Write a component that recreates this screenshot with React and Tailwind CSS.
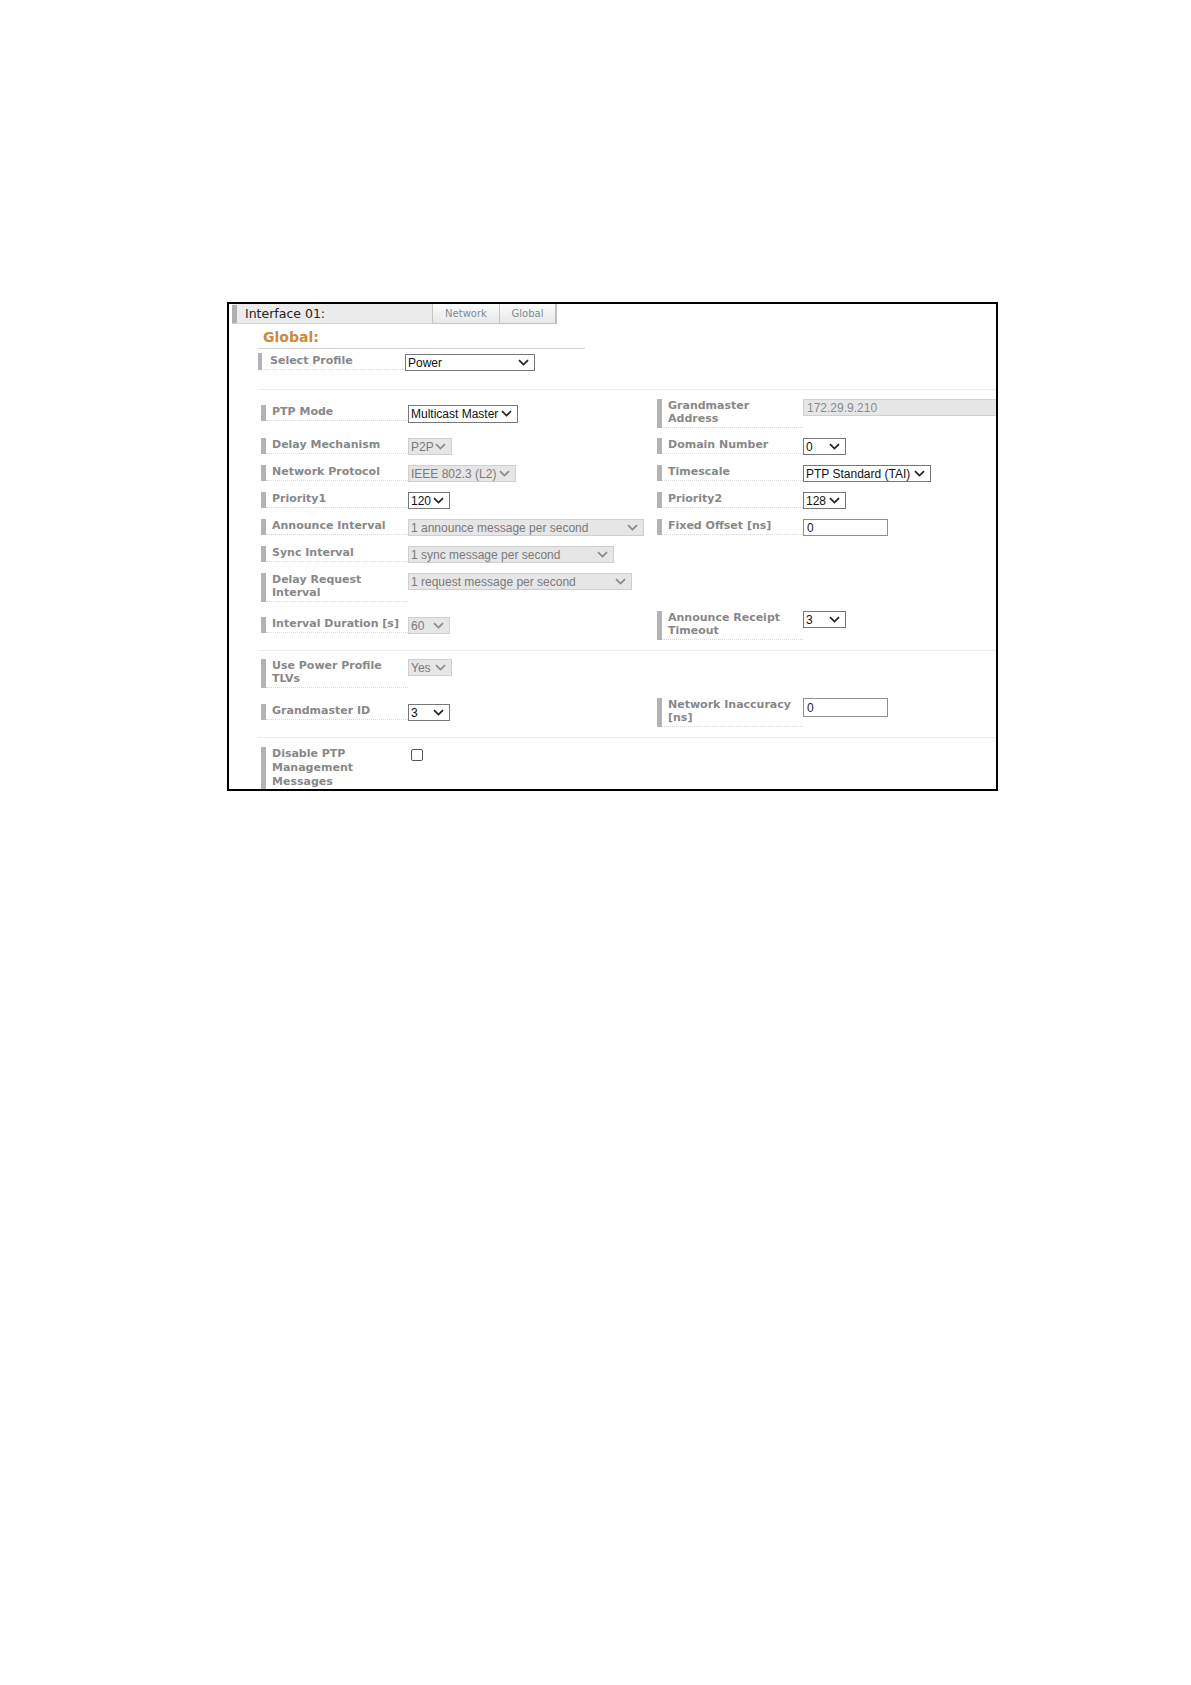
import React from "react";

const LBL =
  "font-['DejaVu_Sans',Verdana,sans-serif] font-bold text-[11px] leading-[13px] text-[#888888] whitespace-nowrap";
const CTRL = "font-['Liberation_Sans',Arial,sans-serif] text-[12px] leading-[14px]";

function Chevron({ color }) {
  return (
    <svg width="11" height="7" viewBox="0 0 11 7" className="shrink-0">
      <path d="M1 1.2 L5.5 5.6 L10 1.2" fill="none" stroke={color} strokeWidth="1.7" />
    </svg>
  );
}

function Label({ children, narrow }) {
  return (
    <div className="flex items-stretch shrink-0">
      <div className="w-[5px] bg-[#b3b3b3] shrink-0" />
      <div
        className={`${narrow ? "w-[141px]" : "w-[142px]"} pl-[6px] pt-0 pb-[2px] border-b border-dotted border-[#d8d8d8] ${LBL}`}
      >
        {children}
      </div>
    </div>
  );
}

function Select({ value, w, disabled, h }) {
  return (
    <div
      className={`${w} ${h || "h-[17px]"} flex items-center justify-between border pl-[2px] pr-[5px] ${CTRL} ${
        disabled ? "bg-[#e6e6e6] border-[#cfcfcf] text-[#7a7a7a]" : "bg-white border-[#777777] text-[#111]"
      }`}
    >
      <span className="whitespace-nowrap">{value}</span>
      <Chevron color={disabled ? "#8a8a8a" : "#222"} />
    </div>
  );
}

function Input({ value, w, h, disabled }) {
  return (
    <div
      className={`${w} ${h} flex items-center border pl-[3px] ${CTRL} ${
        disabled ? "bg-[#e6e6e6] border-[#d0d0d0] text-[#8a8a8a]" : "bg-white border-[#8f8f8f] text-[#222]"
      }`}
    >
      {value}
    </div>
  );
}

function Side({ label, control, right }) {
  return (
    <div className={`${right ? "" : "w-[396px]"} flex items-start shrink-0`}>
      <Label narrow={right}>{label}</Label>
      {control}
    </div>
  );
}

function Row({ left, right, mt }) {
  return (
    <div className={`flex items-center ml-[32px] ${mt}`}>
      <div className="w-[396px] flex items-center shrink-0">{left}</div>
      <div className="flex items-center">{right}</div>
    </div>
  );
}

function Sep({ mt }) {
  return <div className={`${mt} ml-[29px] h-px bg-[#ececec]`} />;
}

export default function App() {
  return (
    <div className="w-[1191px] h-[1685px] bg-white pt-[302px] pl-[227px]">
      <div className="w-[771px] h-[489px] border-2 border-black overflow-hidden bg-white">
        {/* header */}
        <div className="flex h-[20px]">
          <div className="w-[3px] shrink-0" />
          <div className="w-[200px] flex items-stretch bg-[#ececec] border-b border-[#d2d2d2] pt-[1px]">
            <div className="w-[5px] bg-[#b0b0b0]" />
            <span className="pl-[8px] font-['DejaVu_Sans',Verdana,sans-serif] text-[12.5px] leading-[17px] text-[#222]">
              Interface 01:
            </span>
          </div>
          <div className="w-[68px] h-[20px] flex items-center justify-center border-x border-b border-[#c6c6c6] bg-gradient-to-b from-[#fcfcfc] to-[#e8e8e8] font-['DejaVu_Sans',Verdana,sans-serif] text-[10px] text-[#7d8a97]">
            Network
          </div>
          <div className="w-[57px] h-[20px] flex items-center justify-center border-r-2 border-b border-[#c0c0c0] bg-gradient-to-b from-[#fcfcfc] to-[#e8e8e8] font-['DejaVu_Sans',Verdana,sans-serif] text-[10px] text-[#7d8a97]">
            Global
          </div>
        </div>

        {/* Global title */}
        <div className="mt-[5px] ml-[29px] w-[327px] pl-[5px] pb-[2px] border-b border-[#d4d4d4] font-['DejaVu_Sans',Verdana,sans-serif] font-bold text-[14px] leading-[17px] text-[#d0883a]">
          Global:
        </div>

        {/* Select profile */}
        <div className="mt-[4px] ml-[29px] flex items-start">
          <div className="flex items-stretch">
            <div className="w-[4px] bg-[#b3b3b3]" />
            <div className={`w-[143px] pl-[8px] pt-[1px] pb-[2px] border-b border-dotted border-[#d8d8d8] ${LBL}`}>
              Select Profile
            </div>
          </div>
          <div className="mt-[1px]">
            <Select value="Power" w="w-[130px]" />
          </div>
        </div>

        <Sep mt="mt-[18px]" />

        <Row
          mt="mt-[9px]"
          left={<Side label="PTP Mode" control={<Select value="Multicast Master" w="w-[110px]" h="h-[18px]" />} />}
          right={
            <Side
              right
              label={
                <>
                  Grandmaster
                  <br />
                  Address
                </>
              }
              control={<Input value="172.29.9.210" w="w-[200px]" h="h-[17px]" disabled />}
            />
          }
        />
        <Row
          mt="mt-[10px]"
          left={<Side label="Delay Mechanism" control={<Select value="P2P" w="w-[44px]" disabled />} />}
          right={<Side right label="Domain Number" control={<Select value="0" w="w-[43px]" />} />}
        />
        <Row
          mt="mt-[10px]"
          left={<Side label="Network Protocol" control={<Select value="IEEE 802.3 (L2)" w="w-[108px]" disabled />} />}
          right={<Side right label="Timescale" control={<Select value="PTP Standard (TAI)" w="w-[128px]" />} />}
        />
        <Row
          mt="mt-[10px]"
          left={<Side label="Priority1" control={<Select value="120" w="w-[42px]" />} />}
          right={<Side right label="Priority2" control={<Select value="128" w="w-[43px]" />} />}
        />
        <Row
          mt="mt-[10px]"
          left={
            <Side
              label="Announce Interval"
              control={<Select value="1 announce message per second" w="w-[236px]" disabled />}
            />
          }
          right={<Side right label="Fixed Offset [ns]" control={<Input value="0" w="w-[85px]" h="h-[17px]" />} />}
        />
        <Row
          mt="mt-[10px]"
          left={
            <Side label="Sync Interval" control={<Select value="1 sync message per second" w="w-[206px]" disabled />} />
          }
        />
        <Row
          mt="mt-[10px]"
          left={
            <Side
              label={
                <>
                  Delay Request
                  <br />
                  Interval
                </>
              }
              control={<Select value="1 request message per second" w="w-[224px]" disabled />}
            />
          }
        />
        <Row
          mt="mt-[9px]"
          left={<Side label="Interval Duration [s]" control={<Select value="60" w="w-[42px]" disabled />} />}
          right={
            <Side
              right
              label={
                <>
                  Announce Receipt
                  <br />
                  Timeout
                </>
              }
              control={<Select value="3" w="w-[43px]" />}
            />
          }
        />

        <Sep mt="mt-[10px]" />

        <Row
          mt="mt-[8px]"
          left={
            <Side
              label={
                <>
                  Use Power Profile
                  <br />
                  TLVs
                </>
              }
              control={<Select value="Yes" w="w-[44px]" disabled />}
            />
          }
        />
        <Row
          mt="mt-[10px]"
          left={<Side label="Grandmaster ID" control={<Select value="3" w="w-[42px]" />} />}
          right={
            <Side
              right
              label={
                <>
                  Network Inaccuracy
                  <br />
                  [ns]
                </>
              }
              control={<Input value="0" w="w-[85px]" h="h-[19px]" />}
            />
          }
        />

        <Sep mt="mt-[10px]" />

        <div className="mt-[9px] ml-[32px] flex items-start">
          <div className="flex items-stretch">
            <div className="w-[5px] bg-[#b3b3b3]" />
            <div className={`w-[142px] pl-[6px] pt-0 pb-[4px] border-b border-dotted border-[#d8d8d8] ${LBL} leading-[14px]`}>
              Disable PTP
              <br />
              Management
              <br />
              Messages
            </div>
          </div>
          <div className="ml-[3px] mt-[2px] w-[12px] h-[12px] border border-[#555] rounded-[2px] bg-white" />
        </div>
      </div>
    </div>
  );
}
